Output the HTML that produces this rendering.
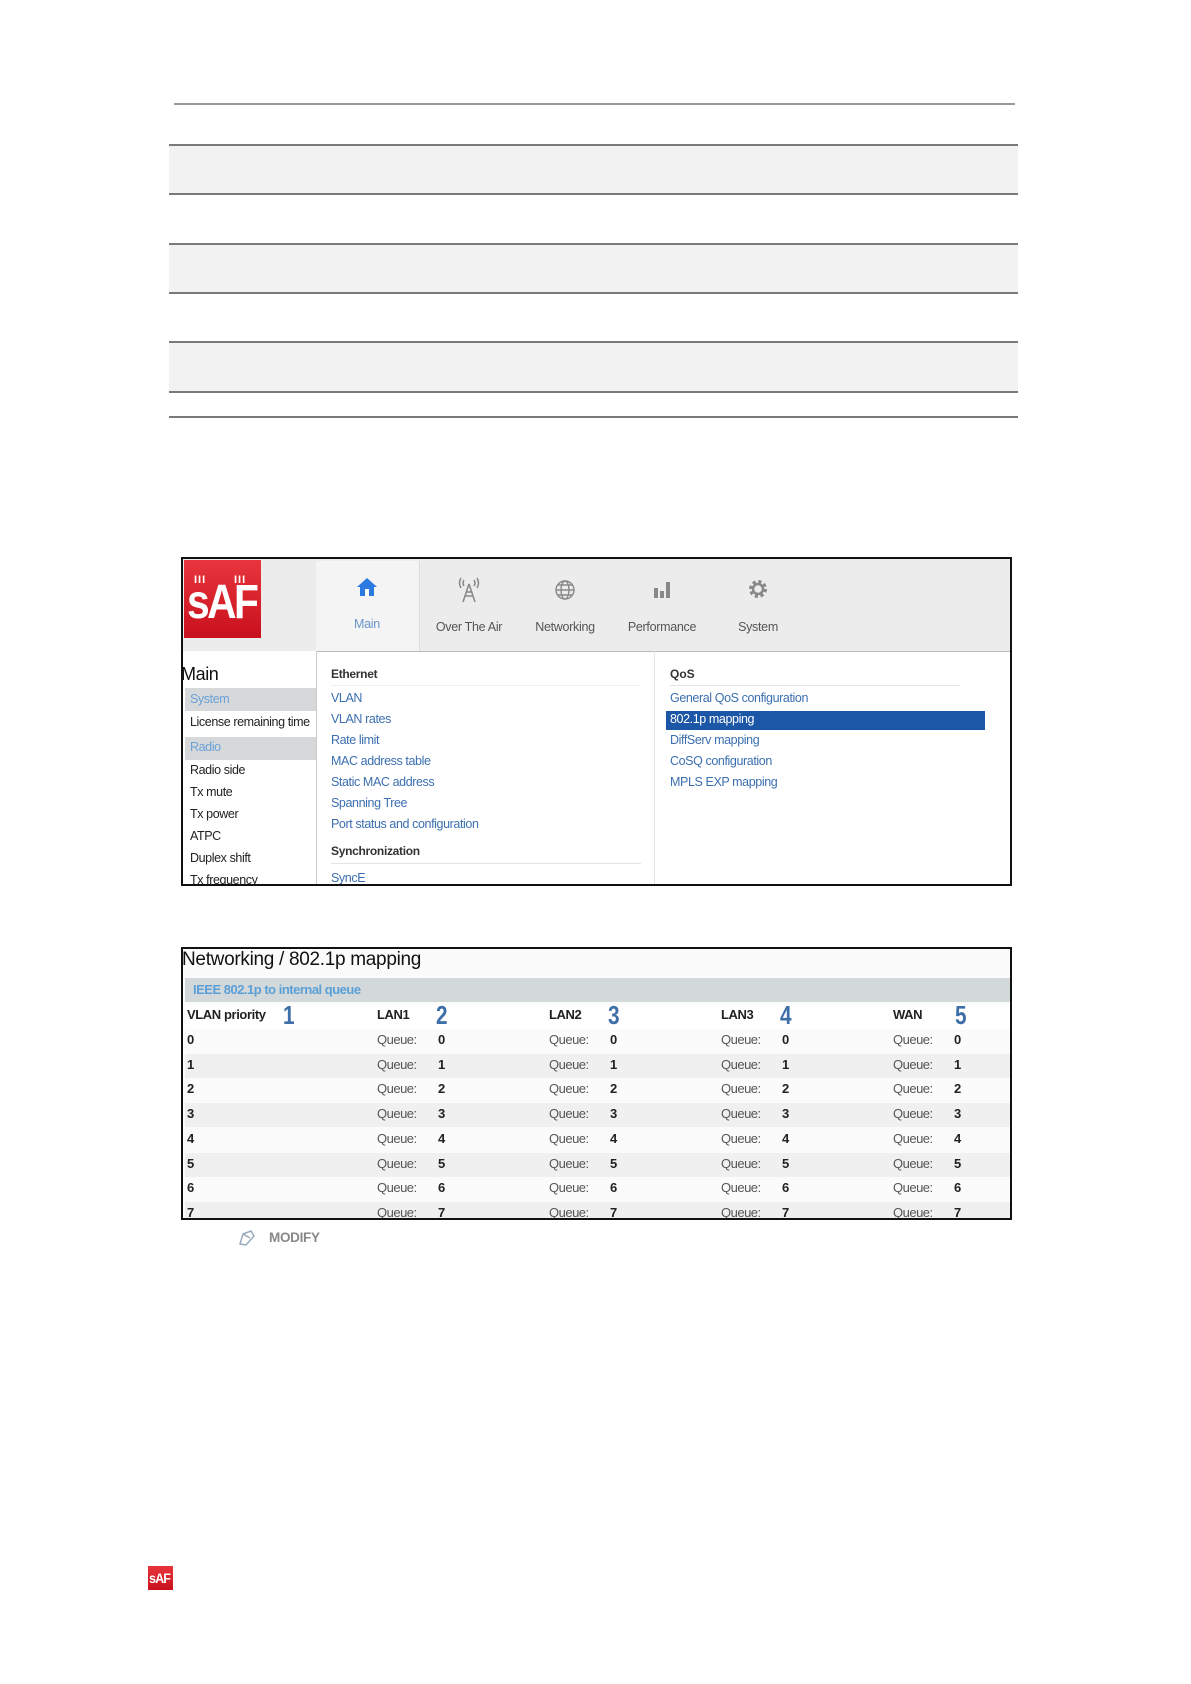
<!DOCTYPE html>
<html><head><meta charset="utf-8">
<style>
*{margin:0;padding:0;box-sizing:border-box}
body{width:1191px;height:1684px;background:#fff;position:relative;font-family:"Liberation Sans",sans-serif;overflow:hidden}
.a{position:absolute;white-space:nowrap}
.hl{position:absolute;left:169px;width:849px;height:2px;background:#7a7a7a}
.band{position:absolute;left:169px;width:849px;background:#f2f2f2}
.logo{position:absolute;background:linear-gradient(#e8353d,#c8101c);color:#fff;font-family:"Liberation Sans",sans-serif;font-weight:bold;overflow:hidden}
.lk{color:#3b6fb0;font-size:12.5px;letter-spacing:-0.4px}
.sb{color:#222;font-size:12.5px;letter-spacing:-0.4px}
.q{color:#555;font-size:13px;letter-spacing:-0.5px}
.v{color:#222;font-size:13px;font-weight:bold;letter-spacing:-0.4px}
.big{color:#3f6fa8;font-size:26px;font-weight:bold;transform:scaleX(0.8);transform-origin:left}
.lab{position:absolute;width:120px;text-align:center;font-size:12.5px;color:#555;letter-spacing:-0.3px}
.ic{position:absolute}
</style></head><body>
<div class="a" style="left:174px;top:103px;width:841px;height:2px;background:#999"></div>
<div class="band" style="top:145px;height:49px"></div>
<div class="band" style="top:244px;height:49px"></div>
<div class="band" style="top:342px;height:50px"></div>
<div class="hl" style="top:144px"></div>
<div class="hl" style="top:193px"></div>
<div class="hl" style="top:243px"></div>
<div class="hl" style="top:292px"></div>
<div class="hl" style="top:341px"></div>
<div class="hl" style="top:391px"></div>
<div class="hl" style="top:416px"></div>

<div class="a" style="left:181px;top:557px;width:831px;height:329px;border:2px solid #111;background:#fff;overflow:hidden">
  <div class="a" style="left:0;top:0;width:827px;height:92px;background:#ececec"></div>
  <div class="a" style="left:133px;top:2px;width:104px;height:90px;background:#f4f4f4;border-right:1px solid #ddd"></div>
  <div class="logo" style="left:1px;top:1px;width:77px;height:78px">
    <div class="a" style="left:10px;top:14px;font-size:11px;letter-spacing:1px">III</div>
    <div class="a" style="left:50px;top:14px;font-size:11px;letter-spacing:1px">III</div>
    <div class="a" style="left:3px;top:15px;font-size:48px;letter-spacing:-3px;transform:scaleX(0.85);transform-origin:left">sAF</div>
  </div>
  <svg class="ic" style="left:173px;top:17px" width="22" height="22" viewBox="0 0 22 22"><path d="M11 2 L21 11 H18 V20 H4 V11 H1 Z" fill="#2a7ae2"/><rect x="9" y="13" width="4" height="7" fill="#fff"/></svg>
  <div class="lab" style="left:124px;top:58px;color:#6a96c8">Main</div>
  <svg class="ic" style="left:273px;top:17px" width="26" height="28" viewBox="0 0 26 28" fill="none" stroke="#888" stroke-width="1.5"><path d="M13 8 L7 26 M13 8 L19 26 M9 20 H17 M10 16 H16"/><path d="M8 4 Q6 7 8 10 M18 4 Q20 7 18 10 M5 2 Q2 7 5 12 M21 2 Q24 7 21 12"/></svg>
  <div class="lab" style="left:226px;top:61px">Over The Air</div>
  <svg class="ic" style="left:371px;top:20px" width="22" height="22" viewBox="0 0 22 22" fill="none" stroke="#888" stroke-width="1.4"><circle cx="11" cy="11" r="9"/><ellipse cx="11" cy="11" rx="4" ry="9"/><path d="M2 11 H20 M4 6 H18 M4 16 H18"/></svg>
  <div class="lab" style="left:322px;top:61px">Networking</div>
  <svg class="ic" style="left:469px;top:19px" width="20" height="22" viewBox="0 0 20 22" fill="#888"><rect x="2" y="10" width="4" height="10"/><rect x="8" y="13" width="4" height="7"/><rect x="14" y="4" width="4" height="16"/></svg>
  <div class="lab" style="left:419px;top:61px">Performance</div>
  <svg class="ic" style="left:564px;top:19px" width="22" height="22" viewBox="0 0 22 22"><circle cx="11" cy="11" r="7" fill="none" stroke="#888" stroke-width="4" stroke-dasharray="3 2.5"/><circle cx="11" cy="11" r="5" fill="none" stroke="#888" stroke-width="2.5"/></svg>
  <div class="lab" style="left:515px;top:61px">System</div>

  <div class="a" style="left:133px;top:92px;width:700px;height:1px;background:#bbb"></div>
  <div class="a" style="left:133px;top:92px;width:1px;height:240px;background:#ccc"></div>
  <div class="a" style="left:471px;top:92px;width:1px;height:240px;background:#e4e4e4"></div>

  <div class="a" style="left:-2px;top:105px;font-size:18px;color:#111;letter-spacing:-0.4px">Main</div>
  <div class="a" style="left:2px;top:129px;width:131px;height:23px;background:#d6d8da"></div>
  <div class="a" style="left:7px;top:133px;font-size:12.5px;color:#6aa0d8;letter-spacing:-0.4px">System</div>
  <div class="a sb" style="left:7px;top:156px">License remaining time</div>
  <div class="a" style="left:2px;top:178px;width:131px;height:23px;background:#d6d8da"></div>
  <div class="a" style="left:7px;top:181px;font-size:12.5px;color:#6aa0d8;letter-spacing:-0.4px">Radio</div>
  <div class="a sb" style="left:7px;top:204px">Radio side</div>
  <div class="a sb" style="left:7px;top:226px">Tx mute</div>
  <div class="a sb" style="left:7px;top:248px">Tx power</div>
  <div class="a sb" style="left:7px;top:270px">ATPC</div>
  <div class="a sb" style="left:7px;top:292px">Duplex shift</div>
  <div class="a sb" style="left:7px;top:314px">Tx frequency</div>

  <div class="a" style="left:148px;top:108px;font-size:12px;font-weight:bold;color:#333;letter-spacing:-0.3px">Ethernet</div>
  <div class="a" style="left:148px;top:126px;width:310px;height:1px;background:#eee"></div>
  <div class="a lk" style="left:148px;top:132px">VLAN</div>
  <div class="a lk" style="left:148px;top:153px">VLAN rates</div>
  <div class="a lk" style="left:148px;top:174px">Rate limit</div>
  <div class="a lk" style="left:148px;top:195px">MAC address table</div>
  <div class="a lk" style="left:148px;top:216px">Static MAC address</div>
  <div class="a lk" style="left:148px;top:237px">Spanning Tree</div>
  <div class="a lk" style="left:148px;top:258px">Port status and configuration</div>
  <div class="a" style="left:148px;top:285px;font-size:12px;font-weight:bold;color:#333;letter-spacing:-0.3px">Synchronization</div>
  <div class="a" style="left:148px;top:304px;width:310px;height:1px;background:#e4e4e4"></div>
  <div class="a lk" style="left:148px;top:312px">SyncE</div>

  <div class="a" style="left:487px;top:108px;font-size:12px;font-weight:bold;color:#333">QoS</div>
  <div class="a" style="left:487px;top:126px;width:290px;height:1px;background:#e4e4e4"></div>
  <div class="a lk" style="left:487px;top:132px">General QoS configuration</div>
  <div class="a" style="left:483px;top:152px;width:319px;height:19px;background:#1c56a6"></div>
  <div class="a" style="left:487px;top:153px;font-size:12.5px;color:#fff;letter-spacing:-0.4px">802.1p mapping</div>
  <div class="a lk" style="left:487px;top:174px">DiffServ mapping</div>
  <div class="a lk" style="left:487px;top:195px">CoSQ configuration</div>
  <div class="a lk" style="left:487px;top:216px">MPLS EXP mapping</div>
</div>

<div class="a" style="left:181px;top:947px;width:831px;height:273px;border:2px solid #111;background:#fbfbfb;overflow:hidden">
  <div class="a" style="left:-1px;top:0px;font-size:19px;color:#111;letter-spacing:-0.3px">Networking / 802.1p mapping</div>
  <div class="a" style="left:2px;top:29px;width:827px;height:24px;background:#d3d8db"></div>
  <div class="a" style="left:10px;top:33px;font-size:13px;font-weight:bold;color:#5aa0d6;letter-spacing:-0.5px">IEEE 802.1p to internal queue</div>
  <div class="a" style="left:2px;top:56px;width:827px;height:24px;background:#fff"></div>
  <div class="a v" style="left:4px;top:58px">VLAN priority</div><div class="a big" style="left:100px;top:51px">1</div>
  <div class="a v" style="left:194px;top:58px">LAN1</div><div class="a big" style="left:253px;top:51px">2</div>
  <div class="a v" style="left:366px;top:58px">LAN2</div><div class="a big" style="left:425px;top:51px">3</div>
  <div class="a v" style="left:538px;top:58px">LAN3</div><div class="a big" style="left:597px;top:51px">4</div>
  <div class="a v" style="left:710px;top:58px">WAN</div><div class="a big" style="left:772px;top:51px">5</div>
  <div id="rows"></div>
</div>
<svg class="a" style="left:236px;top:1228px" width="22" height="20" viewBox="0 0 22 20" fill="none" stroke="#9ab" stroke-width="1.5"><path d="M4 16 L7 6 L15 3 L18 8 L10 17 Z M7 6 L14 10"/></svg>
<div class="a" style="left:269px;top:1230px;font-size:13.5px;font-weight:bold;color:#888;letter-spacing:-0.3px">MODIFY</div>

<div class="logo" style="left:148px;top:1566px;width:25px;height:24px">
  <div class="a" style="left:1px;top:4px;font-size:14px;letter-spacing:-1px;transform:scaleX(0.9);transform-origin:left">sAF</div>
</div>

<script>
var h='';for(var i=0;i<8;i++){var t=81+i*24.7;
if(i%2==1)h+='<div class="a" style="left:2px;top:'+(t-1)+'px;width:827px;height:24px;background:#f0f0f0"></div>';
h+='<div class="a v" style="left:4px;top:'+(t+2)+'px">'+i+'</div>';
[194,366,538,710].forEach(function(x){h+='<div class="a q" style="left:'+x+'px;top:'+(t+2)+'px">Queue:</div><div class="a v" style="left:'+(x+61)+'px;top:'+(t+2)+'px">'+i+'</div>';});}
document.getElementById('rows').outerHTML=h;
</script>
</body></html>
